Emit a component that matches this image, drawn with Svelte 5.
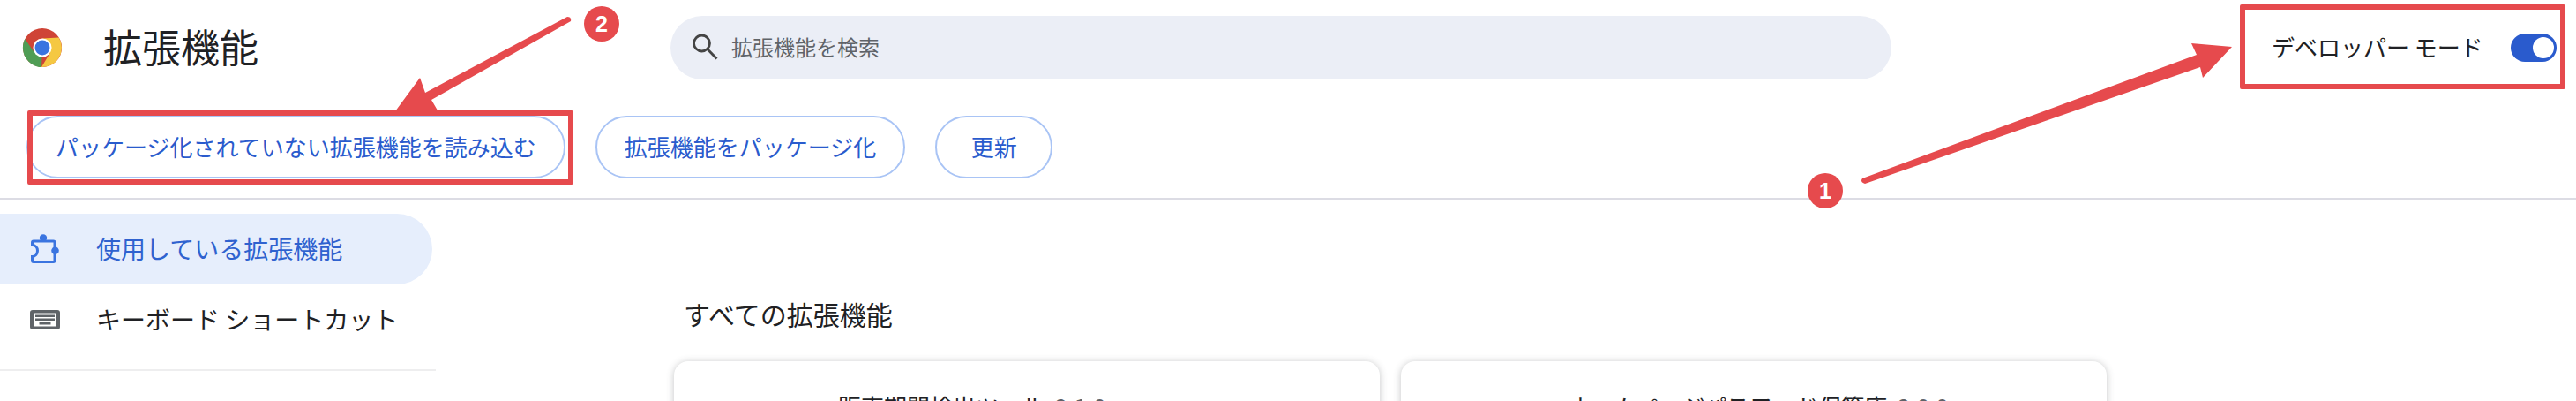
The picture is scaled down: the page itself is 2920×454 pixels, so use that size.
<script>
  const navItems = [
    { label: '使用している拡張機能', active: true },
    { label: 'キーボード ショートカット', active: false }
  ];
  const actions = ['パッケージ化されていない拡張機能を読み込む', '拡張機能をパッケージ化', '更新'];
  const cards = [
    { name: '販売期間検出ツール', version: '2.1.0', indent: 'one' },
    { name: 'ホームページパスワード保管庫', version: '2.0.0', indent: 'two' }
  ];
</script>

<div class="page">
  <header class="top">
    <div class="brand">
      <svg class="logo" viewBox="0 0 48 48" aria-hidden="true">
        <circle cx="24" cy="24" r="23" fill="#cf4436"/>
        <path d="M24 13 L43.5 12 A23 23 0 0 1 23 47 L33.5 29.5 Z" fill="#f5c842"/>
        <path d="M23 47 A23 23 0 0 1 3.5 13.5 L14 29 L24 24 Z" fill="#4f9d55"/>
        <circle cx="24" cy="24" r="11" fill="#fff"/>
        <circle cx="24" cy="24" r="8.8" fill="#3a74e0"/>
      </svg>
      <h1>拡張機能</h1>
    </div>
    <div class="search">
      <svg class="search-icon" viewBox="0 0 30 30" aria-hidden="true">
        <circle cx="10.5" cy="10" r="9" fill="none" stroke="#444" stroke-width="2.8"/>
        <path d="M16.8 16.5 L27.5 27.5" stroke="#444" stroke-width="2.8"/>
      </svg>
      <span>拡張機能を検索</span>
    </div>
    <div class="dev">
      <span>デベロッパー モード</span>
      <span class="toggle"><span class="knob"></span></span>
    </div>
  </header>

  <div class="actions">
    {#each actions as a}
      <button>{a}</button>
    {/each}
  </div>

  <div class="body">
    <nav>
      <div class="nav-list">
        {#each navItems as item}
          <div class="nav-item" class:active={item.active}>
            {#if item.active}
              <svg viewBox="0 0 32 34" aria-hidden="true">
                <circle cx="14" cy="4.5" r="4.2" fill="#3a74e0"/>
                <circle cx="27.5" cy="18.7" r="4.3" fill="#3a74e0"/>
                <path d="M3 8 H25.5 Q27 8 27 9.5 V30 Q27 31.5 25.5 31.5 H3 Q1.5 31.5 1.5 30 V25.5 C5 25.5 7.5 22.5 7.5 18.7 C7.5 15 5 12.5 1.5 12.5 V9.5 Q1.5 8 3 8 Z" fill="none" stroke="#3a74e0" stroke-width="3"/>
              </svg>
            {:else}
              <svg viewBox="0 0 34 22" aria-hidden="true">
                <rect width="34" height="22" rx="3" fill="#5f6368"/>
                <path d="M4 3.5 H30 V18.5 H4 Z" fill="#fff"/>
                <path d="M6 5.5 H28 V8 H6 Z M6 9.5 H28 V12 H6 Z" fill="#5f6368"/>
                <path d="M10.5 14 H23.5 V16.5 H10.5 Z" fill="#5f6368"/>
              </svg>
            {/if}
            <span>{item.label}</span>
          </div>
        {/each}
      </div>
      <div class="nav-rule"></div>
    </nav>
    <main>
      <h2>すべての拡張機能</h2>
      <div class="cards">
        {#each cards as c}
          <section class="card {c.indent}">{c.name} <span class="ver">{c.version}</span></section>
        {/each}
      </div>
    </main>
  </div>

  <svg class="overlay" viewBox="0 0 2920 454" aria-hidden="true">
    <path d="M2111 202 L2490 62 L2484 49 L2530 53 L2497 88 L2494 76 L2114 208 Q2108 206 2111 202 Z" fill="#e64a4d"/>
    <path d="M643 19 L482 105 L476 88 L448 126 L496 125 L489 113 L647 24 Q648 19 643 19 Z" fill="#e64a4d"/>
  </svg>
  <div class="outline outline-load"></div>
  <div class="outline outline-dev"></div>
  <div class="badge badge-1">1</div>
  <div class="badge badge-2">2</div>
</div>

<style>
  :global(body) { margin: 0; background: #fff; }
  .page {
    position: relative;
    width: 2920px;
    height: 454px;
    overflow: hidden;
    background: #fff;
    font-family: "Noto Sans CJK JP", "Liberation Sans", sans-serif;
    color: #202124;
  }
  .top { display: flex; align-items: flex-start; height: 125px; box-sizing: border-box; padding-top: 18px; }
  .brand { display: flex; align-items: center; width: 760px; height: 72px; padding-left: 25px; box-sizing: border-box; }
  .logo { width: 46px; height: 46px; flex: none; }
  h1 { margin: 0 0 0 46px; font-size: 44px; font-weight: 400; line-height: 68px; padding-bottom: 4px; }
  .search {
    width: 1384px; height: 72px; border-radius: 36px; background: #ebeef6;
    display: flex; align-items: center; padding: 0 0 3px 25px; box-sizing: border-box;
    font-size: 24px; color: #5f6368; gap: 14px;
  }
  .search-icon { width: 30px; height: 30px; margin-top: 3px; }
  .dev { margin-left: 431px; display: flex; align-items: center; height: 72px; font-size: 26px; padding-bottom: 3px; box-sizing: border-box; }
  .toggle { margin-left: 31px; width: 52px; height: 32px; border-radius: 16px; background: #2a5bcd; position: relative; flex: none; top: 1.5px; }
  .knob { position: absolute; right: 3px; top: 4px; width: 24px; height: 24px; border-radius: 50%; background: #fff; }
  .actions { display: flex; gap: 34px; height: 101px; box-sizing: border-box; padding: 6px 0 0 30px; border-bottom: 2px solid #dcdce4; }
  button {
    height: 71px; min-width: 133px; padding: 0 31px 3px; border-radius: 36px; border: 2px solid #a9c4f5; background: #fff;
    color: #2a5bcd; font: 400 26px "Noto Sans CJK JP", sans-serif;
  }
  .body { display: flex; }
  nav { width: 494px; padding-top: 16px; flex: none; }
  .nav-list { display: flex; flex-direction: column; }
  .nav-item { display: flex; align-items: center; height: 80px; width: 490px; font-size: 28px; box-sizing: border-box; padding-left: 34px; gap: 41px; border-radius: 0 40px 40px 0; }
  .nav-item svg { width: 34px; height: 34px; flex: none; }
  .nav-item span { padding-bottom: 3px; }
  .nav-item.active { background: #e6eefc; color: #2f62cf; }
  .nav-rule { height: 2px; background: #eeeeef; margin-top: 16px; }
  main { padding-left: 270px; }
  h2 { margin: 111px 0 0; padding: 0 0 4px 11px; font-size: 30px; font-weight: 400; line-height: 36px; }
  .cards { display: flex; gap: 24px; margin-top: 32px; }
  .card { width: 800px; height: 200px; border-radius: 16px; background: #fff; box-shadow: 0 1px 8px rgba(60,64,67,.3); box-sizing: border-box; padding-top: 32px; font-size: 26px; white-space: nowrap; }
  .card.one { padding-left: 186px; }
  .card.two { padding-left: 190px; }
  .ver { font-size: 26px; margin-left: 6px; color: #5f6368; }
  .overlay { position: absolute; inset: 0; width: 2920px; height: 454px; pointer-events: none; }
  .outline { position: absolute; border: 6px solid #e64a4d; box-sizing: border-box; border-radius: 2px; }
  .outline-load { left: 31px; top: 125px; width: 619px; height: 84px; }
  .outline-dev { left: 2539px; top: 5px; width: 369px; height: 96px; }
  .badge { position: absolute; width: 40px; height: 40px; border-radius: 50%; background: #e64a4d; color: #fff; display: flex; align-items: center; justify-content: center; font: 700 25px "Liberation Sans", sans-serif; }
  .badge-1 { left: 2049px; top: 196px; }
  .badge-2 { left: 662px; top: 7px; }
</style>
